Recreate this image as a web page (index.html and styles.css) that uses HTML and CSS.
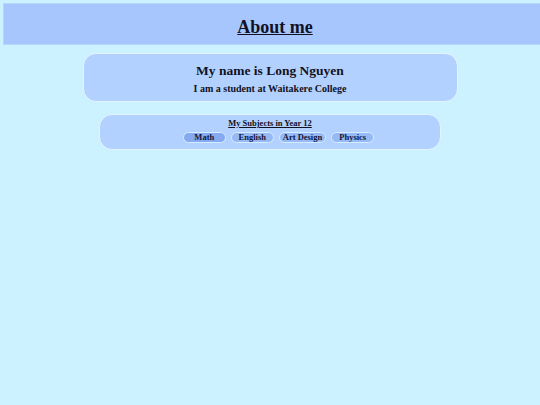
FILE: index.html
```html
<!DOCTYPE html>
<html>
<head>
<meta charset="utf-8">
<link rel="stylesheet" href="styles.css">
</head>
<body>
<header class="top">
  <h1 class="title">About me</h1>
</header>
<section class="card intro">
  <h2 class="name">My name is Long Nguyen</h2>
  <p class="sub">I am a student at Waitakere College</p>
</section>
<section class="card subjects">
  <h3 class="subhead">My Subjects in Year 12</h3>
  <div class="pills">
    <span class="pill active">Math</span>
    <span class="pill">English</span>
    <span class="pill">Art Design</span>
    <span class="pill">Physics</span>
  </div>
</section>
</body>
</html>
```
FILE: styles.css
```css
html, body {
  margin: 0;
  padding: 0;
}
body {
  background: #ccf2ff;
  font-family: "Liberation Serif", "Times New Roman", serif;
  color: #111122;
  width: 540px;
  height: 405px;
  overflow: hidden;
}
.top {
  margin: 3px 0 0 3px;
  height: 40px;
  background: #a6c6fd;
  border: 1px solid #b4d6fb;
  border-right: none;
  display: flex;
  align-items: center;
  justify-content: center;
}
.title {
  margin: 0;
  font-size: 18px;
  font-weight: bold;
  text-decoration: underline;
  padding-left: 6px;
  padding-top: 6px;
}
.card {
  box-sizing: border-box;
  background: #b3d1ff;
  border: 1.5px solid #e4f4ff;
  border-radius: 13px;
  margin-left: auto;
  margin-right: auto;
  display: flex;
  flex-direction: column;
  align-items: center;
  flex-shrink: 0;
}
.intro {
  width: 375px;
  height: 49px;
  min-height: 49px;
  margin-top: 8px;
  padding-top: 9px;
}
.name {
  margin: 0;
  font-size: 13.5px;
  line-height: 16px;
  font-weight: bold;
}
.sub {
  margin: 4px 0 0 0;
  font-size: 10px;
  line-height: 12px;
  font-weight: bold;
}
.subjects {
  width: 342px;
  height: 36px;
  min-height: 36px;
  margin-top: 12px;
  padding-top: 3px;
}
.subhead {
  margin: 0;
  font-size: 8.5px;
  line-height: 11px;
  font-weight: bold;
  text-decoration: underline;
}
.pills {
  display: flex;
  gap: 5px;
  margin-top: 3px;
  margin-left: 17px;
}
.pill {
  box-sizing: border-box;
  min-width: 43px;
  height: 11px;
  padding: 0 3px;
  border: 1px solid #d6ecff;
  border-radius: 6px;
  background: #97b9f4;
  font-size: 8.5px;
  line-height: 9px;
  font-weight: bold;
  text-align: center;
  color: #12163a;
}
.pill.active {
  background: #86aaf0;
}
```
